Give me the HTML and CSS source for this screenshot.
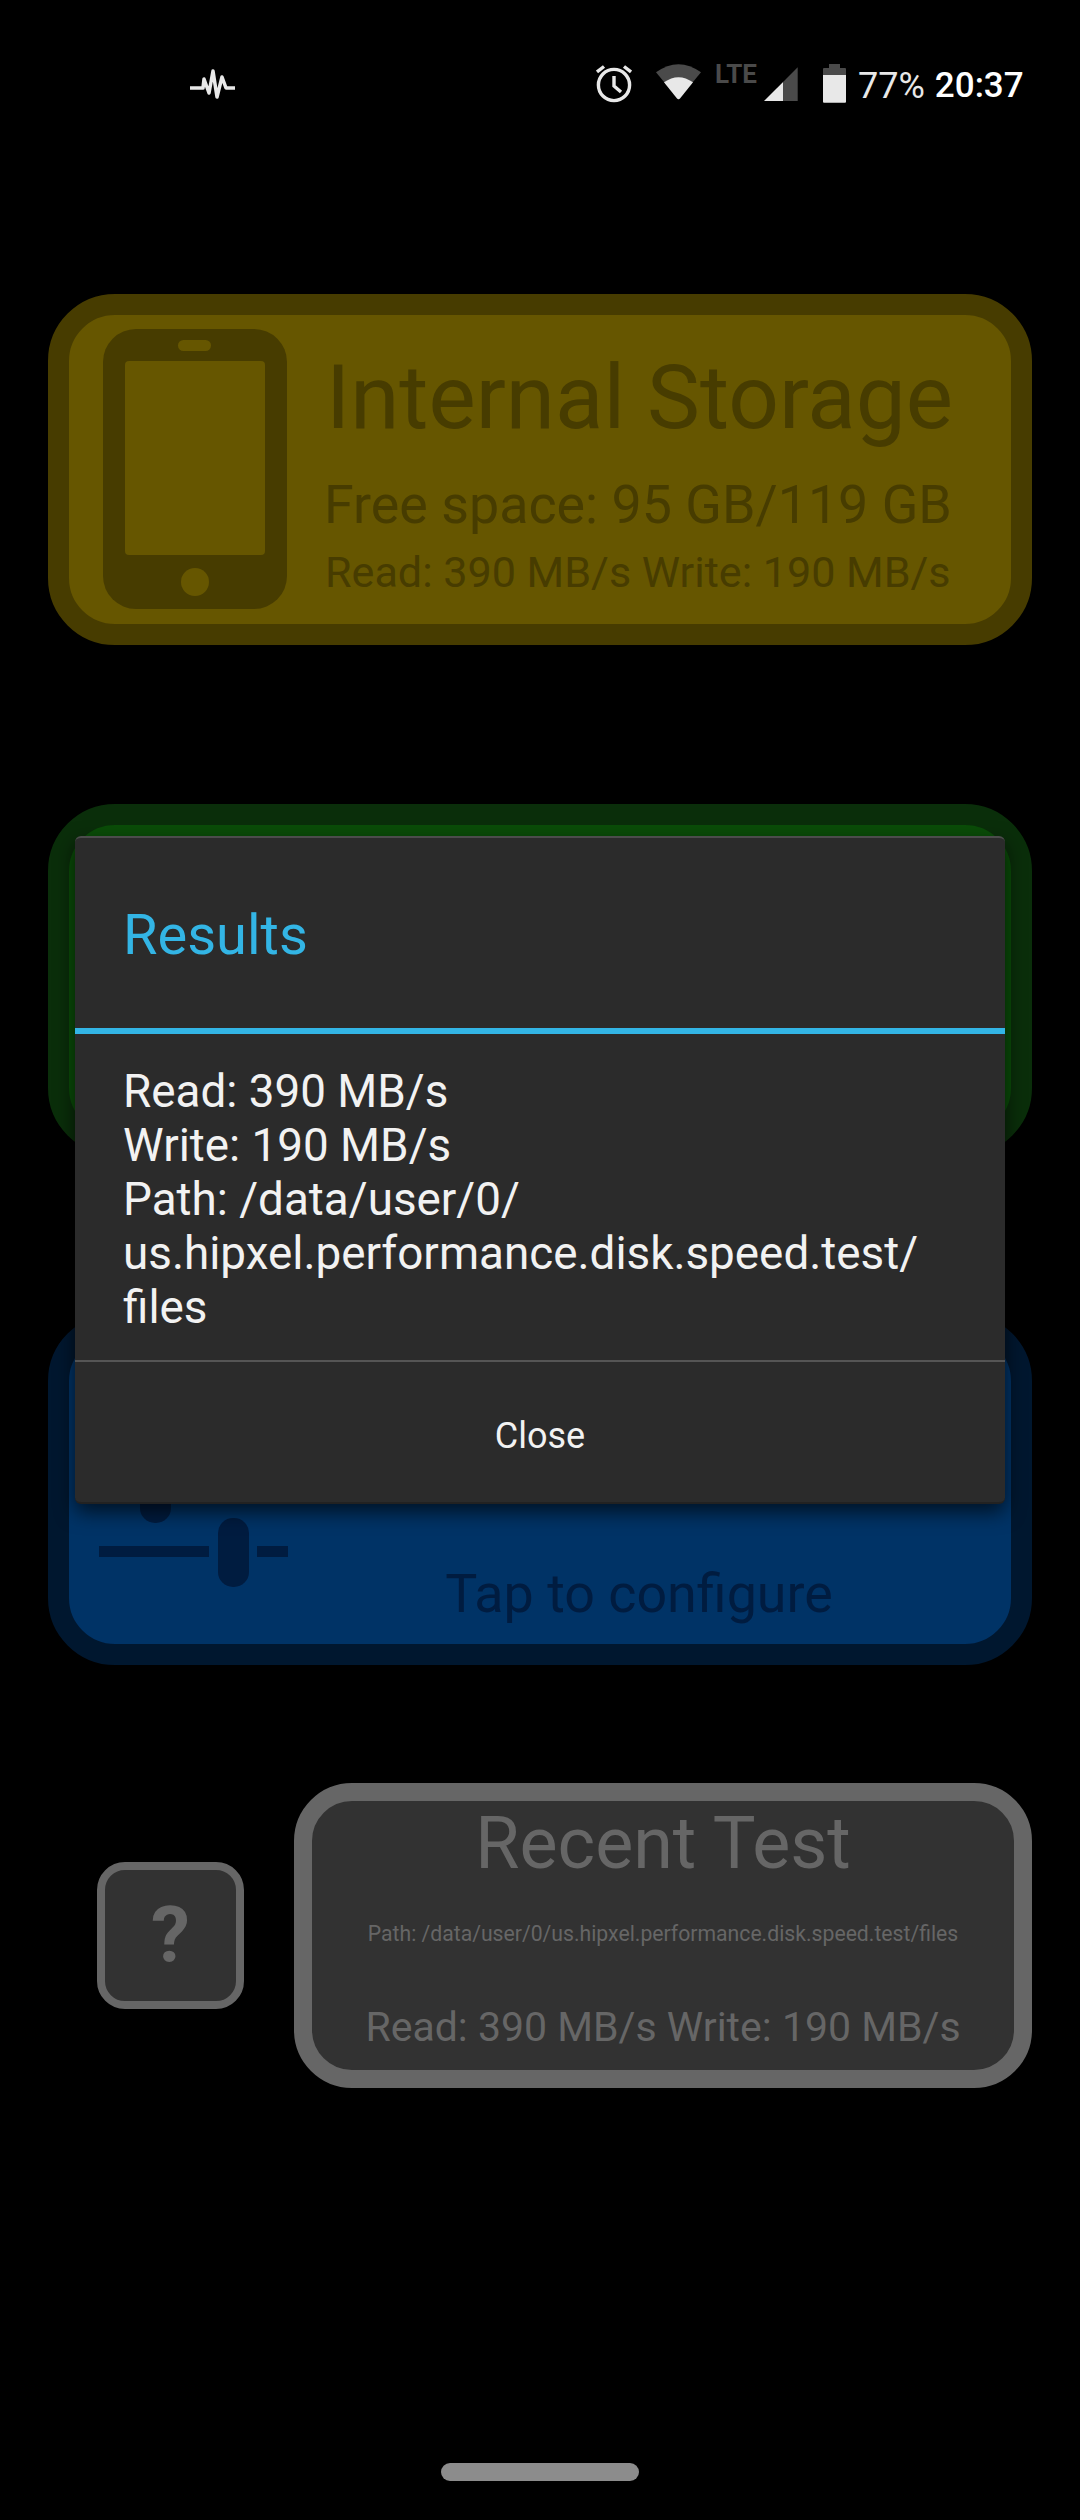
FILE: index.html
```html
<!DOCTYPE html>
<html lang="en">
<head>
<meta charset="utf-8">
<title>Results</title>
<link rel="stylesheet" href="styles.css">
</head>
<body>
<header class="status">
  <svg class="ic-pulse" viewBox="0 0 45 44"><path d="M0 26H13L14 17L19 31L23 9L27 35L32 15L36 26H45"/></svg>
  <svg class="ic-alarm" viewBox="0 0 36 44"><circle cx="18" cy="23" r="15.6"/><path d="M18 14V24L25 30M1 10L8 4.500M35 10L28 4.500"/></svg>
  <svg class="ic-wifi" viewBox="0 0 45 44"><path class="dim" d="M0 10.300Q22.500 -6 45 10.300L22.500 37.500Z"/><path class="lit" d="M8 20.300Q22.500 10 37 20.300L24 36.500Q22.500 38 21 36.500Z"/></svg>
  <span class="lte">LTE</span>
  <svg class="ic-signal" viewBox="0 0 34 44"><path class="lit" d="M0 39L19.300 19.700V39Z"/><path class="dim" d="M19.300 19.700L33.700 5.300V39H19.300Z"/></svg>
  <svg class="ic-battery" viewBox="0 0 23 44"><path class="dim" d="M6 2H17V6H22Q23 6 23 7V13H0V7Q0 6 1 6H6Z"/><path class="lit" d="M0 13H23V39.700Q23 40.700 22 40.700H1Q0 40.700 0 39.700Z"/></svg>
  <span class="pct">77%</span>
  <span class="clock">20:37</span>
</header>

<main class="stack">
  <section class="card card-yellow">
    <svg class="phone" viewBox="0 0 184 280">
      <rect class="ph-body" width="184" height="280" rx="33"/>
      <rect class="ph-hole" x="22" y="32" width="140" height="194" rx="4"/>
      <rect class="ph-hole" x="75" y="11" width="33" height="11" rx="5.500"/>
      <circle class="ph-hole" cx="92" cy="253" r="14"/>
    </svg>
    <div class="info">
      <h2 class="info-title">Internal Storage</h2>
      <p class="info-free">Free space: 95 GB/119 GB</p>
      <p class="info-speed">Read: 390 MB/s Write: 190 MB/s</p>
    </div>
  </section>

  <section class="card card-green"></section>

  <section class="card card-blue">
    <svg class="sliders" viewBox="0 0 189 187">
      <rect class="sl-line" x="0" y="46" width="189" height="11"/>
      <rect class="sl-thumb" x="41" y="54" width="31" height="69" rx="15"/>
      <rect class="sl-line" x="0" y="146" width="110" height="11"/>
      <rect class="sl-line" x="158" y="146" width="31" height="11"/>
      <rect class="sl-thumb" x="119" y="118" width="31" height="69" rx="15"/>
    </svg>
    <p class="configure">Tap to configure</p>
  </section>

  <div class="bottom-row">
    <div class="help">?</div>
    <section class="recent">
      <h2 class="recent-title">Recent Test</h2>
      <p class="recent-path">Path: /data/user/0/us.hipxel.performance.disk.speed.test/files</p>
      <p class="recent-speed">Read: 390 MB/s Write: 190 MB/s</p>
    </section>
  </div>
</main>

<div class="dialog">
  <div class="dialog-title">Results</div>
  <div class="dialog-body">Read: 390 MB/s<br>Write: 190 MB/s<br>Path: /data/user/0/<wbr>us.hipxel.performance.disk.speed.test/<wbr>files</div>
  <div class="dialog-action">Close</div>
</div>

<div class="nav-pill"></div>
</body>
</html>
```
FILE: styles.css
```css
* { box-sizing: border-box; }
html, body { margin: 0; padding: 0; }
body {
  position: relative;
  width: 1080px;
  height: 2520px;
  overflow: hidden;
  background: #000;
  font-family: Roboto, "Liberation Sans", sans-serif;
}
h2, p { margin: 0; font-weight: 400; }

/* status bar */
.status {
  display: flex;
  align-items: flex-start;
  height: 294px;
  padding: 62px 0 0 190px;
  color: #e8e8e8;
}
.status svg { height: 44px; flex: none; display: block; }
.dim { fill: #4a4a4a; }
.lit { fill: #e8e8e8; }
.ic-pulse { width: 45px; }
.ic-pulse path { fill: none; stroke: #e8e8e8; stroke-width: 3.500; stroke-linejoin: round; }
.ic-alarm { width: 36px; margin-left: 361px; }
.ic-alarm circle, .ic-alarm path { fill: none; stroke: #e8e8e8; stroke-width: 3.400; }
.ic-wifi { width: 45px; margin-left: 24px; }
.lte {
  width: 43px;
  margin: -3px 0 0 14px;
  font-size: 26px;
  line-height: 30px;
  font-weight: 700;
  color: #4a4a4a;
  white-space: nowrap;
}
.ic-signal { width: 34px; margin-left: 6px; }
.ic-battery { width: 23px; margin-left: 25px; }
.pct, .clock { font-size: 36px; line-height: 44px; margin-top: 2px; white-space: nowrap; }
.pct { margin-left: 12px; }
.clock { margin-left: 10px; color: #fff; font-size: 35px; font-weight: 500; }

/* cards */
.stack {
  display: flex;
  flex-direction: column;
  gap: 159px;
  padding: 0 48px;
}
.card {
  display: flex;
  height: 351px;
  border: 21px solid;
  border-radius: 67px;
}
.card-yellow { background: #665600; border-color: #473c00; color: #473c00; }
.card-green { background: #0a4d08; border-color: #0a2e0a; }
.card-blue { background: #003366; border-color: #00172f; color: #001c40; }

.phone { flex: none; width: 184px; height: 280px; margin: 14px 0 0 34px; }
.ph-body { fill: #473c00; }
.ph-hole { fill: #665600; }
.info { margin: 33px 0 0 39px; white-space: nowrap; }
.info-title { font-size: 89px; line-height: 100px; }
.info-free { font-size: 53.800px; line-height: 64px; margin-top: 25px; margin-left: -2px; }
.info-speed { font-size: 43.100px; line-height: 50px; margin-top: 11px; margin-left: -1px; }

.sliders { flex: none; width: 189px; height: 187px; margin: auto 0 57px 30px; }
.sl-line, .sl-thumb { fill: #001c40; }
.configure {
  flex: 1;
  align-self: flex-end;
  margin: 0 21px 15px 0;
  font-size: 53.800px;
  line-height: 70px;
  text-align: center;
}

/* bottom row */
.bottom-row {
  display: flex;
  align-items: center;
  gap: 50px;
  margin-top: -41px;
  padding-left: 49px;
}
.help {
  display: flex;
  align-items: center;
  justify-content: center;
  flex: none;
  width: 147px;
  height: 147px;
  border: 8px solid #666;
  border-radius: 28px;
  background: #323232;
  color: #666;
  font-size: 78px;
  font-weight: 700;
}
.recent {
  flex: 1;
  height: 305px;
  padding-top: 3px;
  border: 18px solid #666;
  border-radius: 58px;
  background: #323232;
  color: #666;
  text-align: center;
  white-space: nowrap;
}
.recent-title { font-size: 71.800px; line-height: 80px; }
.recent-path { font-size: 21.200px; line-height: 30px; margin-top: 35px; }
.recent-speed { font-size: 41px; line-height: 56px; margin-top: 50px; }

/* dialog */
.dialog {
  position: absolute;
  left: 75px;
  top: 836px;
  width: 930px;
  height: 668px;
  display: flex;
  flex-direction: column;
  background: #2b2b2b;
  border-top: 2px solid #4c4c4c;
  border-bottom: 2px solid #222;
  border-radius: 6px;
  box-shadow: 0 8px 20px rgba(0, 0, 0, .65);
}
.dialog-title {
  flex: none;
  height: 196px;
  padding: 3px 48px 0;
  border-bottom: 6px solid #33b5e5;
  display: flex;
  align-items: center;
  font-size: 56px;
  color: #33b5e5;
}
.dialog-body {
  flex: 1;
  padding: 31px 48px 0;
  border-bottom: 2px solid #555;
  font-size: 45.800px;
  line-height: 54px;
  color: #f2f2f2;
}
.dialog-action {
  flex: none;
  height: 140px;
  padding-top: 8px;
  display: flex;
  align-items: center;
  justify-content: center;
  font-size: 36px;
  color: #f2f2f2;
}

.nav-pill {
  position: absolute;
  left: 441px;
  top: 2463px;
  width: 198px;
  height: 18px;
  border-radius: 9px;
  background: #8c8c8c;
}
```
